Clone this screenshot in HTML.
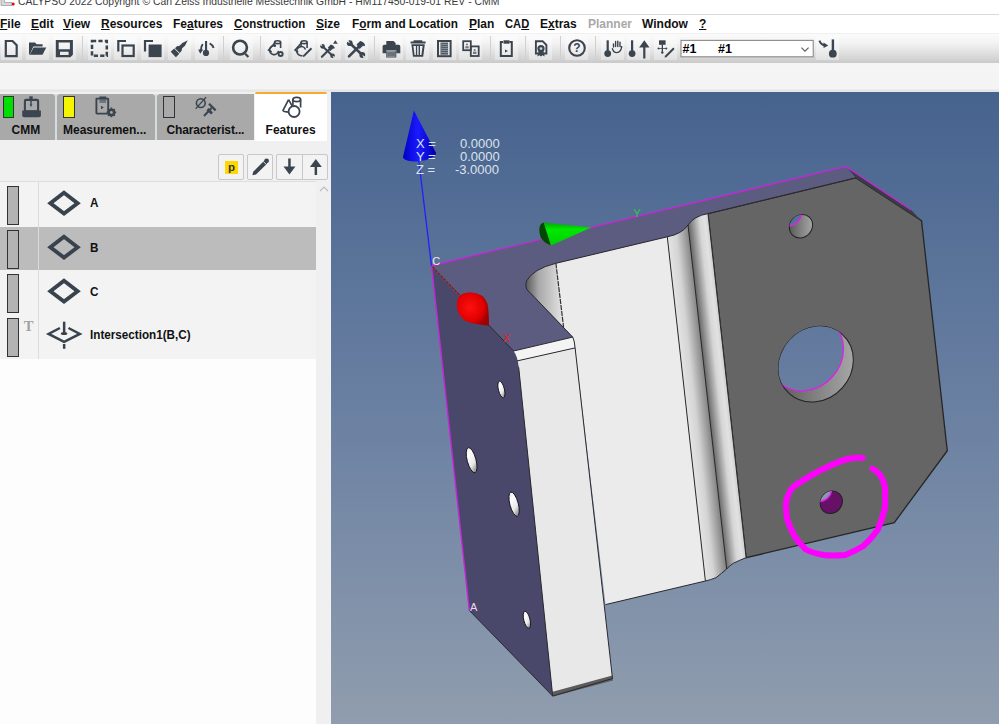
<!DOCTYPE html>
<html><head><meta charset="utf-8">
<style>
html,body{margin:0;padding:0;}
body{width:999px;height:724px;overflow:hidden;position:relative;background:#f0f0f0;font-family:"Liberation Sans",sans-serif;}
.a{position:absolute;}
#title{left:0;top:0;width:999px;height:14px;background:#fff;border-bottom:1px solid #dadada;overflow:hidden;}
#title span{position:absolute;left:17.5px;top:-6.3px;font-size:11.6px;transform:scaleX(0.895);transform-origin:0 0;color:#3a3a3a;white-space:nowrap;}
#menu{left:0;top:15px;width:999px;height:18px;background:#fff;}
#menu span{position:absolute;top:3.2px;font-size:12px;font-weight:bold;color:#111;white-space:nowrap;line-height:12px;}
#menu u{text-decoration:underline;text-underline-offset:1.2px;text-decoration-thickness:1px;}
#tb{left:0;top:33.5px;width:999px;height:29.2px;background:linear-gradient(#fbfbfb 0%,#f3f3f3 30%,#e6e6e6 55%,#d4d4d4 85%,#c9c9c9 100%);}
#strip{left:0;top:62.7px;width:999px;height:29.3px;background:linear-gradient(#f5f5f5 0%,#f4f4f4 90%,#e4e4e4 93%,#e8e8e8 100%);}
.tab{position:absolute;top:94px;height:46px;background:#a9a9a9;}
.tabtxt{position:absolute;font-size:12px;font-weight:bold;color:#111;white-space:nowrap;line-height:12px;}
.row{position:absolute;left:0;width:316px;height:44px;}
.rtxt{position:absolute;left:90.3px;transform:scaleX(0.95);transform-origin:0 0;font-size:12.3px;font-weight:bold;color:#111;white-space:nowrap;line-height:12px;}
.gr{position:absolute;left:7px;width:10px;height:37px;background:#b3b3b3;border:1px solid #333;}
</style></head><body>
<div id="title" class="a">
 <svg class="a" style="left:0;top:0" width="16" height="14"><path d="M1,-1 H4.5 V2.5 H12 V5.5 H1 Z" fill="#d8d8d8" stroke="#a0a0a0" stroke-width="0.8"/><circle cx="13.2" cy="4" r="1.5" fill="#e00"/></svg>
 <span>CALYPSO 2022 Copyright © Carl Zeiss Industrielle Messtechnik GmbH - HM117450-019-01 REV - CMM</span>
</div>
<div id="menu" class="a">
 <span style="left:0px"><u>F</u>ile</span>
 <span style="left:31px"><u>E</u>dit</span>
 <span style="left:63px"><u>V</u>iew</span>
 <span style="left:101px"><u>R</u>esources</span>
 <span style="left:173px">Fe<u>a</u>tures</span>
 <span style="left:234px;transform:scaleX(0.955);transform-origin:0 0"><u>C</u>onstruction</span>
 <span style="left:316px"><u>S</u>ize</span>
 <span style="left:352px;transform:scaleX(0.98);transform-origin:0 0">F<u>o</u>rm and Location</span>
 <span style="left:469px"><u>P</u>lan</span>
 <span style="left:505px;transform:scaleX(0.93);transform-origin:0 0">CA<u>D</u></span>
 <span style="left:540px">E<u>x</u>tras</span>
 <span style="left:588px;color:#a8a8a8">Planner</span>
 <span style="left:642px">Window</span>
 <span style="left:699px"><u>?</u></span>
</div>
<div id="tb" class="a"></div>
<div id="strip" class="a"></div>
<svg class="a" style="left:0;top:33px" width="999" height="29" viewBox="0 33 999 29">
<g fill="#ffffff" opacity="0.35">
<rect x="1" y="36" width="21" height="24"/><rect x="26" y="36" width="23" height="24"/><rect x="53" y="36" width="23" height="24"/>
<rect x="88" y="36" width="23" height="24"/><rect x="114" y="36" width="23" height="24"/><rect x="141" y="36" width="23" height="24"/><rect x="168" y="36" width="23" height="24"/><rect x="195" y="36" width="23" height="24"/>
<rect x="230" y="36" width="23" height="24"/>
<rect x="265" y="36" width="23" height="24"/><rect x="292" y="36" width="23" height="24"/><rect x="318" y="36" width="23" height="24"/><rect x="345" y="36" width="23" height="24"/>
<rect x="380" y="36" width="23" height="24"/><rect x="406" y="36" width="23" height="24"/><rect x="433" y="36" width="23" height="24"/><rect x="459" y="36" width="23" height="24"/>
<rect x="495" y="36" width="23" height="24"/><rect x="529" y="36" width="23" height="24"/><rect x="565" y="36" width="23" height="24"/>
<rect x="601" y="36" width="23" height="24"/><rect x="627" y="36" width="23" height="24"/><rect x="654" y="36" width="23" height="24"/><rect x="816" y="36" width="23" height="24"/>
</g>
<g stroke="#d0d0d0" stroke-width="1">
<line x1="82.5" y1="36" x2="82.5" y2="60"/><line x1="223.5" y1="36" x2="223.5" y2="60"/><line x1="260.5" y1="36" x2="260.5" y2="60"/><line x1="374.5" y1="36" x2="374.5" y2="60"/>
<line x1="490.5" y1="36" x2="490.5" y2="60"/><line x1="525.5" y1="36" x2="525.5" y2="60"/><line x1="560.5" y1="36" x2="560.5" y2="60"/><line x1="595.5" y1="36" x2="595.5" y2="60"/>
</g>
<g fill="none" stroke="#3b4550" stroke-width="2.2" stroke-linejoin="miter">
<!-- new doc -->
<path d="M5.8,41 H12.5 L16.7,45.2 V56.2 H5.8 Z"/>
<!-- dashed rect -->
<rect x="92" y="41" width="14.8" height="14.8" stroke-width="2.5" stroke-dasharray="4.2 2.2"/>
<!-- copy outline -->
<path d="M126,41 H118.3 V51.5"/><rect x="122.5" y="45.5" width="11.2" height="10.5"/>
<!-- copy filled back -->
<path d="M153,41 H145 V51.5"/>
<!-- search -->
<circle cx="240" cy="47.6" r="6.9" stroke-width="2.6"/>
<!-- help -->
<circle cx="577" cy="48" r="7.8" stroke-width="2.1"/>
<!-- film -->
<rect x="438" y="41" width="12.6" height="15.2" stroke-width="2"/>
<!-- pictures -->
<rect x="463.2" y="41.2" width="7.6" height="9" stroke-width="1.8"/>
<rect x="470.8" y="46.4" width="7.9" height="9.6" stroke-width="1.8"/>
<!-- clipboard -->
<path d="M503,42 H500.8 V56.1 H511.8 V42 H509.5" stroke-width="2"/>
<!-- certificate -->
<path d="M538,53.5 H535.9 V41.2 H542.6 L546.4,45 V53.5 H544" stroke-width="1.9"/>
</g>
<g fill="#3b4550">
<!-- folder -->
<path d="M29,42.5 H35 L36.6,44.3 H42.6 V46.6 H33.3 L29.8,54.6 H29 Z"/>
<path d="M33.6,47.6 H46.3 L42.5,54.7 H29.8 Z"/>
<!-- save -->
<path d="M55.8,39.9 H72.9 V54.8 L70.4,57.3 H55.8 Z M58.7,42.4 V49.3 H69.9 V42.4 Z M60,51.7 V55 H68.6 V51.7 Z" fill-rule="evenodd"/>
<!-- copy filled front -->
<rect x="148.6" y="44.5" width="13" height="12.6"/>
<!-- brush -->
<g transform="translate(173.3,54.5) rotate(-44.4)">
<rect x="0" y="-3.7" width="4.8" height="7.4"/>
<path d="M5.6,-3.3 H8.3 L10.6,-1.8 L14.5,-1.9 L20.2,0 L14.5,1.9 L10.6,1.8 L8.3,3.3 H5.6 Z"/>
</g>
<!-- probe -->
<rect x="205" y="41" width="2.1" height="11"/><circle cx="206" cy="52.9" r="3.1"/>
<path d="M202.8,44.2 Q200.8,46.5 200.9,50.2" fill="none" stroke="#3b4550" stroke-width="1.9"/>
<path d="M198.2,49.4 L203.3,49.6 L200.2,53.8 Z"/>
<path d="M209.6,43.3 Q212.4,44.6 213.6,48" fill="none" stroke="#3b4550" stroke-width="1.9"/>
<path d="M246,53 L249.2,56.2 L247.6,57.8 L244.4,54.6 Z"/>
<!-- printer -->
<path d="M386.3,41 H393.5 L395.6,43 V45 H386.3 Z"/>
<path d="M384.2,44.8 H398.6 Q400.3,44.8 400.3,46.6 V53.3 H396.3 V50.5 H386.2 V53.3 H382.6 V46.6 Q382.6,44.8 384.2,44.8 Z"/>
<path d="M387.3,51.3 H395.3 V56.8 H387.3 Z" fill="#6a727a"/>
<path d="M386.3,51 H387.3 V57 H395.3 V51 H396.3 V57.6 H386.3 Z"/>
<!-- trash -->
<path d="M413.6,40.2 H422.3 V41.5 H425.6 V43.6 H410.6 V41.5 H413.6 Z"/>
<path d="M411.4,44.3 H424.8 L423.2,56.8 H413 Z M413.4,46 L414.6,55 H415.9 V46 Z M417.2,46 V55 H418.6 V46 Z M420,46 V55 H421.4 L422.6,46 Z" fill-rule="evenodd"/>
<!-- film stripes -->
<rect x="440.5" y="42.5" width="7.6" height="12.2" fill="#555d66"/>
<g fill="#9aa0a6"><rect x="440.5" y="44" width="7.6" height="0.7"/><rect x="440.5" y="46" width="7.6" height="0.7"/><rect x="440.5" y="48" width="7.6" height="0.7"/><rect x="440.5" y="50" width="7.6" height="0.7"/><rect x="440.5" y="52" width="7.6" height="0.7"/></g>
<!-- pictures people -->
<circle cx="467" cy="44.5" r="1.1" fill="#777"/><rect x="465.3" y="46.2" width="3.4" height="2.2" fill="#777"/>
<circle cx="474.7" cy="50" r="1.1" fill="#777"/><rect x="473" y="51.6" width="3.4" height="2.4" fill="#777"/>
<!-- clipboard -->
<rect x="503.5" y="40.3" width="6" height="3.4"/><path d="M505,49.4 L508,51 L505,52.6 Z"/>
<!-- certificate ribbon -->
<circle cx="541" cy="48.6" r="3.6"/><circle cx="541" cy="48.6" r="1.4" fill="#cfcfcf"/>
<path d="M538.5,51 L537.3,56.5 L539.5,55.2 L541,56.5 L542.5,55.2 L544.7,56.5 L543.5,51 Z"/>
<!-- help ? -->
<text x="577" y="52.2" font-family="Liberation Sans" font-weight="bold" font-size="12" text-anchor="middle">?</text>
<!-- probe hand -->
<rect x="606.6" y="40.3" width="2.2" height="11"/><circle cx="607.7" cy="53.6" r="3.4"/>
<!-- probe arrow -->
<rect x="631" y="40.3" width="2.2" height="11"/><circle cx="632.1" cy="53.6" r="3.4"/>
<path d="M644.3,40.3 L649.5,47.6 H645.4 V58.6 H643.2 V47.6 H639.1 Z"/>
<!-- tree pen -->
<rect x="659" y="40.3" width="6.6" height="4.5"/><rect x="661.7" y="44.5" width="1.3" height="8"/>
<circle cx="662.3" cy="52.6" r="1.2"/><circle cx="658.5" cy="48.4" r="1"/><circle cx="666.3" cy="48.4" r="1"/>
<rect x="659" y="48" width="7" height="0.8"/>
<path d="M673.2,47.6 L674.6,49 L666.4,57.2 L664.6,57.6 L665,55.8 Z"/>
<!-- arrow probe -->
<rect x="831.7" y="39.4" width="2.4" height="13"/><circle cx="832.8" cy="53.7" r="3.9"/>
<path d="M819.4,40.6 Q820.8,44.6 824.6,45.3" fill="none" stroke="#3b4550" stroke-width="1.9"/>
<path d="M823.5,42.4 L828.3,45.6 L823.6,47.9 Z"/>
</g>
<g fill="none" stroke="#3b4550" stroke-linecap="round">
<!-- probe hand outline -->
<path d="M613.5,47 V44 M615.6,46.5 V41.5 M617.8,46.5 V41.2 M620,46.5 V42.3 M621.6,47.5 V46 Q621.5,52.4 616.6,52.6 Q613.5,52.6 612.4,48.6" stroke-width="1.4"/>
</g>

<defs><g id="wh">
<path d="M3,3 L15,14.5" stroke="#3b4550" stroke-width="2.6"/>
<circle cx="2.8" cy="2.9" r="2.9" fill="#3b4550"/><path d="M2.8,2.9 L-0.5,1.2 L1.2,-0.5 Z" fill="#e9e9e9"/>
<circle cx="15.3" cy="14.7" r="2.9" fill="#3b4550"/><path d="M15.3,14.7 L18.6,16.4 L16.9,18.1 Z" fill="#e2e2e2"/>
<path d="M2,16 L12,6" stroke="#3b4550" stroke-width="2.6" stroke-linecap="round"/>
<path d="M9.5,4.3 L13.2,0.6 Q16.5,1 18,4.5 L17.6,6 L16,5.5 L12.6,8.6 Z" fill="#3b4550"/>
</g></defs>
<use href="#wh" transform="translate(347,40.3)"/>
<use href="#wh" transform="translate(320.3,44) scale(0.8)"/>
<path d="M335.4,40.3 L337.8,43.8 H333 Z" fill="#3b4550"/>
<g fill="none" stroke="#3b4550" stroke-width="1.6">
<ellipse cx="277.6" cy="42.2" rx="3" ry="1.4"/><path d="M274.6,42.2 V47 M280.6,42.2 V48"/>
<path d="M275,42.8 L268.6,50 L271.6,52"/><path d="M278.5,50.8 A4.5,4.5 0 1 1 276,46" />
<ellipse cx="304.1" cy="42.2" rx="3" ry="1.4"/><path d="M301.1,42.2 V47 M307.1,42.2 V48"/>
<path d="M301.5,42.8 L295.1,50 L298.1,52"/><path d="M305.5,49.5 A4.5,4.5 0 1 0 302.5,55.5"/>
</g>
<g fill="#3b4550">
<circle cx="280.6" cy="54" r="3"/><circle cx="280.6" cy="54" r="1.1" fill="#e3e3e3"/>
<path d="M310.8,47.6 L312.2,49 L304.6,56.6 L302.8,57 L303.2,55.2 Z"/>
</g>
<!-- dropdown -->
<rect x="681" y="40.4" width="132.2" height="16.4" fill="#fff" stroke="#8a8a8a" stroke-width="1.1"/>
<text x="682.5" y="53.4" font-family="Liberation Sans" font-weight="bold" font-size="12.5" fill="#000">#1</text>
<text x="718" y="53.4" font-family="Liberation Sans" font-weight="bold" font-size="12.5" fill="#000">#1</text>
<path d="M801.4,47.6 L805,51.2 L808.6,47.6" fill="none" stroke="#5a5a5a" stroke-width="1.1"/>
</svg>
<div class="a" style="left:0;top:92px;width:331px;height:632px;background:#f0f0f0"></div>
<div class="tab" style="left:0;width:55px;border-radius:0 3px 0 0"></div>
<div class="tab" style="left:57px;width:98px;border-radius:3px 3px 0 0"></div>
<div class="tab" style="left:157px;width:97px;border-radius:3px 0 0 0"></div>
<div class="a" style="left:255px;top:92px;width:72px;height:49px;background:#fff;border-top:2.6px solid #f2aa35;border-radius:2px 2px 0 0;box-sizing:border-box"></div>
<div class="a" style="left:55px;top:94px;width:2px;height:46px;background:#d6dcdc"></div>
<div class="a" style="left:155px;top:94px;width:2px;height:46px;background:#d6dcdc"></div>
<div class="a" style="left:3px;top:96px;width:11px;height:22px;background:#00e000;border:1px solid #333;box-sizing:border-box"></div>
<div class="a" style="left:63px;top:96px;width:12px;height:22px;background:#f5f500;border:1px solid #333;box-sizing:border-box"></div>
<div class="a" style="left:163px;top:96px;width:12px;height:22px;background:#a9a9a9;border:1px solid #333;box-sizing:border-box"></div>
<span class="tabtxt" style="left:11.5px;top:123.5px">CMM</span>
<span class="tabtxt" style="left:63px;top:123.5px">Measuremen...</span>
<span class="tabtxt" style="left:166.5px;top:123.5px;letter-spacing:-0.15px">Characterist...</span>
<span class="tabtxt" style="left:265.6px;top:123.8px">Features</span>
<svg class="a" style="left:0;top:92px" width="331" height="40" viewBox="0 92 331 40">
<g fill="none" stroke="#3b4550" stroke-width="2.1">
<rect x="24.9" y="99.9" width="13.2" height="11.5" rx="1.2"/>
<rect x="96.4" y="98.6" width="11.8" height="15" rx="0.5" stroke-width="1.9"/>
<circle cx="200.8" cy="103.1" r="4.4" stroke-width="1.6"/><path d="M195.6,108.9 L206,97.2" stroke-width="1.3"/>
<path d="M204,116 L211.5,108" stroke-width="2"/><path d="M209,103.8 L215.6,110.4" stroke-width="2.2"/>
<ellipse cx="296.75" cy="99.5" rx="3.85" ry="2.1" stroke-width="1.7"/><path d="M292.9,99.5 V105.5 M300.6,99.5 V107.5" stroke-width="1.7"/>
<path d="M288.6,99.6 L283,110.3 Q283.2,111.3 285.2,111.7 L288.6,112.1 M288.6,99.6 L292.2,106.2" stroke-width="1.7"/>
<circle cx="294.1" cy="111.5" r="5.5" stroke-width="1.8"/>
</g>
<g fill="#3b4550">
<rect x="29.3" y="96.3" width="3.4" height="2.6"/><rect x="30.3" y="98" width="1.4" height="7"/><path d="M29.6,104.5 H32.4 L31,107 Z"/>
<path d="M22.2,110.5 H40.9 V115.5 Q40.9,117.3 39,117.3 H24.1 Q22.2,117.3 22.2,115.5 Z"/>
<rect x="99.4" y="96.5" width="6.8" height="2.2"/><rect x="99.4" y="99.6" width="6.8" height="1"/><rect x="99.4" y="101.5" width="6.8" height="1"/>
<path d="M101,105.8 L103.8,107.5 L101,109.2 Z"/>
<circle cx="111.4" cy="112.4" r="3.9"/>
<g stroke="#3b4550" stroke-width="1.6"><path d="M111.4,107.6 V117.2 M106.6,112.4 H116.2 M108,109 L114.8,115.8 M114.8,109 L108,115.8"/></g>
<circle cx="111.4" cy="112.4" r="1.4" fill="#a9a9a9"/>
<path d="M206.5,110.2 L211,114.5 L213,112.5 L208.5,108 Z"/>
</g>
</svg>

<div class="a" style="left:0;top:181px;width:316px;height:543px;background:#fdfdfd;border-top:1px solid #dedede"></div>
<div class="a" style="left:316px;top:181px;width:15px;height:543px;background:#f0f0f0"></div>
<div class="a" style="left:0;top:182px;width:316px;height:177px;background:#f3f3f3"></div>
<svg class="a" style="left:318px;top:184px" width="12" height="10"><path d="M2,7 L6,3 L10,7" fill="none" stroke="#bdbdbd" stroke-width="1.2"/></svg>
<div class="a" style="left:218px;top:154px;width:26px;height:26px;background:#f3f3f3;border:1px solid #c8c8c8;box-sizing:border-box;border-radius:2px"></div>
<div class="a" style="left:247px;top:154px;width:26px;height:26px;background:#f3f3f3;border:1px solid #c8c8c8;box-sizing:border-box;border-radius:2px"></div>
<div class="a" style="left:276px;top:154px;width:52px;height:26px;background:#f3f3f3;border:1px solid #c8c8c8;box-sizing:border-box;border-radius:2px"></div>
<div class="a" style="left:302px;top:154px;width:1px;height:26px;background:#c8c8c8"></div>
<div class="a" style="left:225px;top:160.5px;width:13px;height:13px;background:#ffd800"></div>
<svg class="a" style="left:218px;top:154px" width="110" height="26" viewBox="218 154 110 26">
<text x="231.5" y="171.3" font-family="Liberation Sans" font-weight="bold" font-size="11.5" text-anchor="middle" fill="#333">p</text>
<g fill="#3b4550">
<path d="M264.4,160.6 L267.2,163.4 L256,174.6 L252.4,175.3 L253.2,171.8 Z"/><circle cx="266.6" cy="160.8" r="2.4"/><path d="M263.2,161.4 L266.4,164.6" stroke="#f3f3f3" stroke-width="0.9"/>
<rect x="288.2" y="158.5" width="2.5" height="10"/><path d="M283.5,166.5 H295.4 L289.45,174.5 Z"/>
<rect x="314.6" y="165" width="2.5" height="10"/><path d="M309.9,167 H321.8 L315.85,159 Z"/>
</g></svg>
<div class="row" style="left:0;top:227px;height:43px;background:#bcbcbc"></div>
<div class="a" style="left:38px;top:182px;width:1px;height:177px;background:#dcdcdc"></div>
<div class="gr" style="top:186px"></div>
<div class="gr" style="top:230px"></div>
<div class="gr" style="top:274px"></div>
<div class="gr" style="top:318px"></div>
<span class="rtxt" style="top:197.3px">A</span>
<span class="rtxt" style="top:241.5px">B</span>
<span class="rtxt" style="top:285.8px">C</span>
<span class="rtxt" style="top:329.3px">Intersection1(B,C)</span>
<svg class="a" style="left:0;top:181px" width="120" height="180" viewBox="0 181 120 180">
<g fill="none" stroke="#38434e" stroke-width="3.9" stroke-linejoin="miter">
<path d="M64,192.8 L77.6,203.2 L64,213.6 L50.4,203.2 Z"/>
<path d="M64,236.8 L77.6,247.2 L64,257.6 L50.4,247.2 Z"/>
<path d="M64,280.8 L77.6,291.2 L64,301.6 L50.4,291.2 Z"/>
<path d="M59.9,328 L48.6,333.9 L64.1,341.8 L79.8,333.9 L68.5,328" stroke-width="2.5"/>
</g>
<g fill="#38434e"><rect x="62.9" y="321.7" width="2.5" height="11.5"/><ellipse cx="64.1" cy="333.5" rx="3.2" ry="1.5"/><rect x="62.9" y="344" width="2.5" height="4.8"/></g>
<text x="28.7" y="331.2" font-family="Liberation Serif" font-weight="bold" font-size="14.5" text-anchor="middle" fill="#a2a2a2">T</text>
</svg>

<svg class="a" style="left:331px;top:92px" width="668" height="632" viewBox="331 92 668 632">
<defs>
<linearGradient id="bg" x1="0" y1="92" x2="0" y2="724" gradientUnits="userSpaceOnUse">
<stop offset="0" stop-color="#46638e"/><stop offset="0.5" stop-color="#6a80a2"/><stop offset="1" stop-color="#909dae"/>
</linearGradient>
<linearGradient id="fa" x1="526" y1="0" x2="562" y2="0" gradientUnits="userSpaceOnUse">
<stop offset="0" stop-color="#5a5a5a"/><stop offset="0.35" stop-color="#a8a8a8"/><stop offset="1" stop-color="#e2e2e2"/>
</linearGradient>
<linearGradient id="f1" x1="674.3" y1="300" x2="696.5" y2="297.56" gradientUnits="userSpaceOnUse">
<stop offset="0" stop-color="#e4e4e4"/><stop offset="0.4" stop-color="#d4d4d4"/><stop offset="1" stop-color="#828282"/>
</linearGradient>
<linearGradient id="f2" x1="696.5" y1="300" x2="717.6" y2="297.68" gradientUnits="userSpaceOnUse">
<stop offset="0" stop-color="#666666"/><stop offset="0.55" stop-color="#d6d6d6"/><stop offset="0.8" stop-color="#e2e2e2"/><stop offset="1" stop-color="#cccccc"/>
</linearGradient>
<linearGradient id="hw" x1="0" y1="0" x2="1" y2="1">
<stop offset="0" stop-color="#4a4a4a"/><stop offset="0.6" stop-color="#8c8c8c"/><stop offset="1" stop-color="#b5b5b5"/>
</linearGradient>
<linearGradient id="bluecone" x1="0" y1="0" x2="1" y2="0">
<stop offset="0" stop-color="#0000c8"/><stop offset="0.45" stop-color="#1a1aff"/><stop offset="1" stop-color="#0000b0"/>
</linearGradient>
<radialGradient id="redcone" cx="0.4" cy="0.45" r="0.6">
<stop offset="0" stop-color="#ff1010"/><stop offset="0.7" stop-color="#e00000"/><stop offset="1" stop-color="#a00000"/>
</radialGradient>
<clipPath id="n0"><ellipse cx="815.9" cy="364.1" rx="39.7" ry="35.5" transform="rotate(-48 815.9 364.1)" /></clipPath><clipPath id="fc0"><ellipse cx="806" cy="353" rx="39.7" ry="35.5" transform="rotate(-48 806 353)" /></clipPath>
<clipPath id="n1"><ellipse cx="801" cy="226.3" rx="12.3" ry="11" transform="rotate(-48 801 226.3)" /></clipPath><clipPath id="fc1"><ellipse cx="790" cy="214" rx="12.3" ry="11" transform="rotate(-48 790 214)" /></clipPath>
<clipPath id="n2"><ellipse cx="831.3" cy="502.3" rx="11.8" ry="10.6" transform="rotate(-48 831.3 502.3)" /></clipPath><clipPath id="fc2"><ellipse cx="820.5" cy="490.2" rx="11.8" ry="10.6" transform="rotate(-48 820.5 490.2)" /></clipPath>
</defs>
<rect x="331" y="92" width="668" height="632" fill="url(#bg)"/>
<!-- gray face -->
<path d="M708,213.6 L855.7,177.8 L921.5,220.7 L947.3,450.7 L894.3,522.6 L746.1,557.7 Z" fill="#656565" stroke="#262626" stroke-width="1.3"/>
<!-- chamfer strip -->
<path d="M845.8,166.4 L911.2,210 L921.5,220.7 L855.7,177.8 Z" fill="#3a3c44"/>
<!-- wall face -->
<path d="M555.9,263.3 L667.3,236.8 L705.4,581 L605.5,604.6 L575.1,347.9 L572.7,337.1 L563.6,327.3 Z" fill="#ebebeb"/>
<!-- fillet A -->
<path d="M555.9,263.3 L563.6,327.3 L530.5,293.1 Q524,289 526.5,281 Q533,269 555.9,263.3 Z" fill="url(#fa)"/>
<!-- fillet 1 -->
<path d="M667.3,236.8 Q682,234 688,225 L726.7,569 Q722,573 716,577.7 Q710,580 705.4,581 Z" fill="url(#f1)"/>
<!-- fillet 2 -->
<path d="M688,225 Q690,220 694.7,218.2 Q700,215 708,213.6 L746.1,557.7 Q740,560 733.5,563.2 Q729,566 726.7,569 Z" fill="url(#f2)"/>
<!-- top face -->
<path d="M431.5,265.7 L845.8,166.4 L855.7,177.8 L708,213.6 Q694,216 688,225 Q682,234 667.3,236.8 L555.9,263.3 Q533,269 526.5,281 Q524,289 530.5,293.1 L572.7,337.1 L513.6,351 Z" fill="#5c5b80"/>
<!-- lower white face -->
<path d="M516.7,361 L575.1,347.9 L612.5,678.5 L552.7,696.1 L518.7,367.3 Z" fill="#e8e8e8"/>
<path d="M552.7,691.8 L612.3,675.6 L613,680.5 L552.9,696.6 Z" fill="#5c5c5c"/>
<!-- bevel -->
<path d="M513.6,351 L572.7,337.1 L575.1,347.9 L516.7,361 Z" fill="#f4f4f4"/>
<!-- purple face -->
<path d="M431.5,265.7 L513.6,351 Q517.5,356 518.7,367.3 L552.7,696.1 L469.3,610.4 Z" fill="#49486b"/>
<!-- edges -->
<g fill="none" stroke="#2a2a30" stroke-width="1">
<path d="M855.7,177.8 L708,213.6 Q694,216 688,225 Q682,234 667.3,236.8 L555.9,263.3 Q533,269 526.5,281 Q524,289 530.5,293.1 L572.7,337.1 L513.6,351"/>
<path d="M431.5,265.7 L513.6,351"/>
<path d="M516.7,361 L575.1,347.9"/>
<path d="M572.7,337.1 Q574.5,340 575.1,347.9 L612.5,678.5 L552.7,696.1"/>
<path d="M518.7,367.3 L552.7,696.1 L469.3,610.4"/>
<path d="M605.5,604.6 L705.4,581 Q710,580 716,577.7 Q722,573 726.7,569 Q729,566 733.5,563.2 Q740,560 746.1,557.7"/>
<path d="M667.3,236.8 L705.4,581 M688,225 L726.7,569 M708,213.6 L746.1,557.7"/>
<path d="M555.9,263.3 L563.6,327.3" stroke="#333" stroke-width="1.2" stroke-dasharray="5 1"/>
</g>
<!-- magenta edges -->
<g fill="none" stroke="#c825d8" stroke-width="1.4">
<path d="M431.5,265.7 L845.8,166.4 L911.2,210"/>
<path d="M431.5,265.7 L469.3,610.4"/>
</g>
<!-- holes gray face -->
<g>
<ellipse cx="815.9" cy="364.1" rx="39.7" ry="35.5" transform="rotate(-48 815.9 364.1)" fill="url(#hw)" stroke="#222" stroke-width="1"/>
<g clip-path="url(#n0)"><g clip-path="url(#fc0)"><rect x="331" y="92" width="668" height="632" fill="url(#bg)"/></g><ellipse cx="806" cy="353" rx="39.7" ry="35.5" transform="rotate(-48 806 353)" fill="none" stroke="#e020e8" stroke-width="1.3"/></g>
<ellipse cx="801" cy="226.3" rx="12.3" ry="11" transform="rotate(-48 801 226.3)" fill="url(#hw)" stroke="#222" stroke-width="1"/>
<g clip-path="url(#n1)"><g clip-path="url(#fc1)"><rect x="331" y="92" width="668" height="632" fill="url(#bg)"/></g><ellipse cx="790" cy="214" rx="12.3" ry="11" transform="rotate(-48 790 214)" fill="none" stroke="#e020e8" stroke-width="1.5"/></g>
<ellipse cx="831.3" cy="502.3" rx="11.8" ry="10.6" transform="rotate(-48 831.3 502.3)" fill="#661066" stroke="#222" stroke-width="1"/>
<g clip-path="url(#n2)"><g clip-path="url(#fc2)"><rect x="331" y="92" width="668" height="632" fill="#8898b0"/></g><ellipse cx="820.5" cy="490.2" rx="11.8" ry="10.6" transform="rotate(-48 820.5 490.2)" fill="none" stroke="#e020e8" stroke-width="1.5"/></g>
</g>
<!-- holes purple face -->
<linearGradient id="ph" x1="0" y1="0" x2="0.3" y2="1"><stop offset="0" stop-color="#dcdcdc"/><stop offset="0.35" stop-color="#ffffff"/><stop offset="0.75" stop-color="#e8e8e8"/><stop offset="1" stop-color="#9a9a9a"/></linearGradient>
<g fill="url(#ph)" stroke="#14141c" stroke-width="0.9">
<ellipse cx="501.4" cy="389.5" rx="3" ry="8.6" transform="rotate(-14 501.4 389.5)"/>
<ellipse cx="471.6" cy="460.2" rx="4.4" ry="13" transform="rotate(-15 471.6 460.2)"/>
<ellipse cx="514.1" cy="504.2" rx="4.2" ry="12.5" transform="rotate(-15 514.1 504.2)"/>
<ellipse cx="526.9" cy="619.8" rx="3.1" ry="8.8" transform="rotate(-14 526.9 619.8)"/>
</g>
<!-- axes -->
<line x1="417.5" y1="150" x2="431.5" y2="265.7" stroke="#2020ff" stroke-width="1.3"/>
<path d="M413.9,110.6 L403,157 A16.8,6.5 -8 0 0 436.2,153.3 Z" fill="url(#bluecone)"/>
<path d="M431.5,265.7 L460,296" stroke="#e02020" stroke-width="1.2" stroke-dasharray="2 2"/>
<path d="M457,303 Q458,292 471,292.5 Q484,293 487.5,304 Q489,312 489,325.8 Q478,325 468,322 Q456,316 457,303 Z" fill="url(#redcone)"/>
<linearGradient id="gc" x1="0" y1="0" x2="0" y2="1"><stop offset="0" stop-color="#00a800"/><stop offset="0.3" stop-color="#00e800"/><stop offset="1" stop-color="#00d000"/></linearGradient>
<path d="M544,222.6 Q538.6,223.5 539.4,232 Q540.3,242 551,245.4 Z" fill="#004a00"/>
<path d="M543.6,222.6 L591.3,227.4 L551,245.4 Z" fill="url(#gc)"/>
<g font-family="Liberation Sans" font-size="13" fill="#dde3ec">
<text x="416" y="148">X =</text><text x="416" y="161.2">Y =</text><text x="416" y="174.4">Z =</text>
<text x="499.8" y="148" text-anchor="end">0.0000</text><text x="499.8" y="161.2" text-anchor="end">0.0000</text><text x="499" y="174.4" text-anchor="end">-3.0000</text>
</g>
<text x="432.2" y="265" font-family="Liberation Sans" font-size="11" fill="#eeeeee">C</text>
<text x="470" y="610.5" font-family="Liberation Sans" font-size="11" fill="#f0d8f0">A</text>
<text x="633.2" y="217.4" font-family="Liberation Sans" font-size="11.5" fill="#2ec83e" transform="translate(0,0)">Y</text>
<text x="503" y="342.2" font-family="Liberation Sans" font-size="11" fill="#e02020">X</text>
<!-- annotation -->
<path d="M862.5,458 C852,457 845,459 829.3,466 C818,471 805.9,478.6 805.9,478.6 C798,483 791.5,488.5 791.5,488.5 C788,494 786.2,501 786.2,501 C785.5,510 787.1,519 787.1,519 C790,528 795.1,537 795.1,537 C800,544 805.9,549.5 805.9,549.5 C812,553 823.9,555 823.9,555 C832,556 845.4,555 845.4,555 C855,551 863.4,546 863.4,546 C872,538 877.7,529.8 877.7,529.8 C882,520 884.9,508.2 884.9,508.2 C885.5,497 884.9,486.7 884.9,486.7 C883,479 879.5,474.1 879.5,474.1 C876,470 872.4,468.7 872.4,468.7" fill="none" stroke="#ff00ff" stroke-width="6" stroke-linecap="round" stroke-linejoin="round"/>
</svg>

</body></html>
